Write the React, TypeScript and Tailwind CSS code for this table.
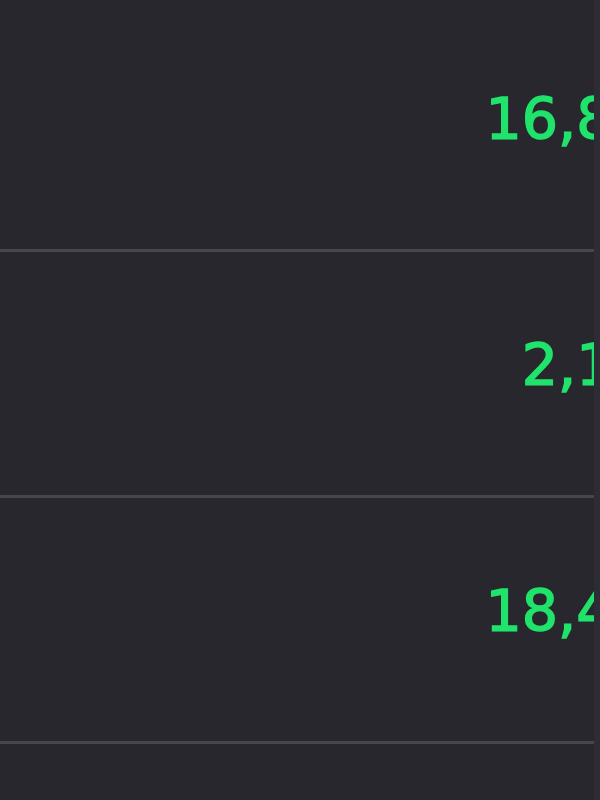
import React from "react";

interface Row {
  value: string;
}

const rows: Row[] = [
  { value: "16,842" },
  { value: "2,156" },
  { value: "18,437" },
  { value: "9,310" },
];

const App: React.FC = () => {
  return (
    <div className="flex h-[800px] w-[600px] overflow-hidden bg-[#28272d]">
      {/* Table column (clipped at the right) */}
      <div className="flex-1 overflow-hidden">
        <div className="mt-[6px] w-[685px]">
          {rows.map((row, index) => (
            <div
              key={index}
              className="flex h-[246px] items-center justify-end border-b-[3px] border-[#47464c] pb-[16px]"
            >
              <span
                className="text-[57px] leading-none text-[#20e36b] [-webkit-text-stroke:1.5px_#20e36b]"
                style={{ fontFamily: '"DejaVu Sans", sans-serif' }}
              >
                {row.value}
              </span>
            </div>
          ))}
        </div>
      </div>

      {/* Scrollbar track */}
      <div className="w-[6px] shrink-0 bg-[#2d2c34]" />
    </div>
  );
};

export default App;
